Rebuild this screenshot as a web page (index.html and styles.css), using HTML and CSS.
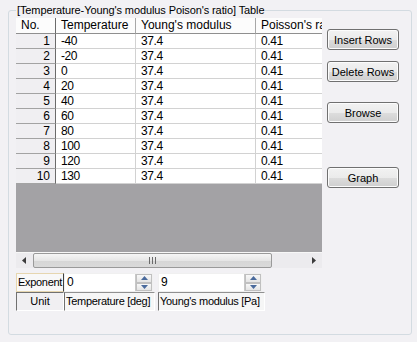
FILE: index.html
```html
<!DOCTYPE html>
<html lang="en">
<head>
  <meta charset="UTF-8" />
  <title>Young's modulus Table</title>
  <link rel="stylesheet" href="styles.css">
</head>
<body>
  <fieldset class="group">
    <legend>[Temperature-Young's modulus Poison's ratio] Table</legend>
    <div class="main">
      <div class="left">
        <div class="grid">
          <div class="row head">
            <div class="hc first">No.</div>
            <div class="hc">Temperature</div>
            <div class="hc">Young's modulus</div>
            <div class="hc">Poisson's ra</div>
          </div>
          <div class="row"><div class="rh">1</div><div class="c">-40</div><div class="c">37.4</div><div class="c">0.41</div></div>
          <div class="row"><div class="rh">2</div><div class="c">-20</div><div class="c">37.4</div><div class="c">0.41</div></div>
          <div class="row"><div class="rh">3</div><div class="c">0</div><div class="c">37.4</div><div class="c">0.41</div></div>
          <div class="row"><div class="rh">4</div><div class="c">20</div><div class="c">37.4</div><div class="c">0.41</div></div>
          <div class="row"><div class="rh">5</div><div class="c">40</div><div class="c">37.4</div><div class="c">0.41</div></div>
          <div class="row"><div class="rh">6</div><div class="c">60</div><div class="c">37.4</div><div class="c">0.41</div></div>
          <div class="row"><div class="rh">7</div><div class="c">80</div><div class="c">37.4</div><div class="c">0.41</div></div>
          <div class="row"><div class="rh">8</div><div class="c">100</div><div class="c">37.4</div><div class="c">0.41</div></div>
          <div class="row"><div class="rh">9</div><div class="c">120</div><div class="c">37.4</div><div class="c">0.41</div></div>
          <div class="row"><div class="rh">10</div><div class="c">130</div><div class="c">37.4</div><div class="c">0.41</div></div>
          <div class="empty"></div>
          <div class="hscroll">
            <div class="arrow">
              <svg width="5" height="7" viewBox="0 0 5 7"><path d="M4 0 L0 3.5 L4 7 Z" fill="#3c3c3c"/></svg>
            </div>
            <div class="thumb">
              <svg width="7" height="7" viewBox="0 0 7 7"><path d="M0.5 0v7M3.5 0v7M6.5 0v7" stroke="#6a6a6a" stroke-width="1"/></svg>
            </div>
            <div class="track"></div>
            <div class="arrow">
              <svg width="5" height="7" viewBox="0 0 5 7"><path d="M1 0 L5 3.5 L1 7 Z" fill="#3c3c3c"/></svg>
            </div>
          </div>
        </div>

        <div class="units">
          <div class="urow">
            <div class="lbl exp">Exponent</div>
            <div class="num first-num">
              <span>0</span>
              <div class="spin">
                <div class="sp"><svg width="7" height="4" viewBox="0 0 7 4"><path d="M0 4 L3.5 0 L7 4 Z" fill="#4a6a9c"/></svg></div>
                <div class="sp"><svg width="7" height="4" viewBox="0 0 7 4"><path d="M0 0 L3.5 4 L7 0 Z" fill="#4a6a9c"/></svg></div>
              </div>
            </div>
            <div class="num second-num">
              <span>9</span>
              <div class="spin">
                <div class="sp"><svg width="7" height="4" viewBox="0 0 7 4"><path d="M0 4 L3.5 0 L7 4 Z" fill="#4a6a9c"/></svg></div>
                <div class="sp"><svg width="7" height="4" viewBox="0 0 7 4"><path d="M0 0 L3.5 4 L7 0 Z" fill="#4a6a9c"/></svg></div>
              </div>
            </div>
          </div>
          <div class="urow">
            <div class="lbl unit">Unit</div>
            <div class="lbl ucell t-unit">Temperature [deg]</div>
            <div class="lbl ucell y-unit">Young's modulus [Pa]</div>
          </div>
        </div>
      </div>

      <div class="buttons">
        <button class="btn b-insert">Insert Rows</button>
        <button class="btn b-delete">Delete Rows</button>
        <button class="btn b-browse">Browse</button>
        <button class="btn b-graph">Graph</button>
      </div>
    </div>
  </fieldset>
</body>
</html>
```

FILE: styles.css
```css
body {
  margin: 0;
  background-color: #f2f1f4;
  font-family: "Liberation Sans", Arial, sans-serif;
  font-size: 11px;
  color: #000;
}
.group {
  box-sizing: border-box;
  margin: 3px 0 0 8px;
  width: 404px;
  height: 332px;
  padding: 1px 0 0 7px;
  border: 1px solid #d3dbe1;
  border-radius: 3px;
  min-width: 0;
}
.group legend {
  padding: 0 1px;
  margin-left: 0;
  line-height: 14px;
  font-size: 11px;
  letter-spacing: -0.1px;
}
.main {
  display: flex;
  gap: 5px;
}
.left {
  width: 306px;
}
.grid {
  display: flex;
  flex-direction: column;
  height: 250px;
  width: 306px;
  overflow: hidden;
  background: #fff;
}
.row {
  display: grid;
  grid-template-columns: 40px 80px 120px 66px;
  width: 306px;
  height: 15px;
  flex: none;
}
.row.head {
  height: 16px;
}
.row > div {
  box-sizing: border-box;
  line-height: 14px;
  white-space: nowrap;
  overflow: hidden;
}
.hc {
  background: #fcfcfc;
  border-right: 1px solid #a7a7a7;
  border-bottom: 1px solid #8f8f8f;
  padding-left: 5px;
  line-height: 15px !important;
  font-size: 12px;
}
.hc.first {
  border-right-color: #6b6b6b;
}
.hc:last-child {
  border-right: none;
}
.rh {
  background: #f0eff2;
  border-right: 1px solid #6b6b6b;
  border-bottom: 1px solid #a3a3a3;
  text-align: right;
  padding-right: 5px;
  font-size: 12px;
}
.c {
  border-right: 1px solid #d2d2d2;
  border-bottom: 1px solid #d2d2d2;
  padding-left: 5px;
  font-size: 12px;
  letter-spacing: -0.4px;
}
.c:last-child {
  border-right: none;
}
.empty {
  flex: 1;
  background: #a3a2a5;
}
.hscroll {
  display: flex;
  height: 16px;
  flex: none;
  background: #ecebee;
  border-top: 1px solid #f7f7f7;
  box-sizing: border-box;
}
.arrow {
  width: 17px;
  display: flex;
  align-items: center;
  justify-content: center;
}
.thumb {
  box-sizing: border-box;
  width: 239px;
  border: 1px solid #9a9a9a;
  border-radius: 2px;
  background: linear-gradient(#f6f6f6, #e6e6e6 50%, #d6d6d6 51%, #dadada);
  display: flex;
  align-items: center;
  justify-content: center;
}
.track {
  flex: 1;
}
.units {
  margin-top: 5px;
}
.urow {
  display: flex;
  height: 19px;
}
.lbl {
  box-sizing: border-box;
  line-height: 17px;
  white-space: nowrap;
  overflow: hidden;
  font-size: 11px;
}
.exp {
  width: 48px;
  padding-left: 1px;
  letter-spacing: -0.3px;
  background: #f8f8f8;
  border: 1px solid #e6d6b0;
  border-right-color: #404040;
}
.num {
  box-sizing: border-box;
  display: flex;
  justify-content: space-between;
  background: #fff;
  border: 1px solid #f0f0f0;
  font-size: 12px;
  line-height: 17px;
}
.num span {
  padding-left: 2px;
}
.first-num {
  width: 89px;
}
.second-num {
  width: 104px;
  margin-left: 5px;
}
.spin {
  width: 16px;
  display: flex;
  flex-direction: column;
  border-left: 1px solid #c8c8c8;
  background: #f0f0f0;
}
.sp {
  flex: 1;
  display: flex;
  align-items: center;
  justify-content: center;
  background: linear-gradient(#f8f8f8, #e4e4e4);
  border: 1px solid #c0c0c0;
}
.unit {
  width: 48px;
  text-align: center;
  background: #f0eff2;
  border: 1px solid #fff;
  border-top-color: #707070;
  border-left-color: #707070;
}
.ucell {
  padding-left: 1px;
  letter-spacing: -0.3px;
  background: #f6f6f6;
  border: 1px solid #fff;
  border-top-color: #909090;
  border-left-color: #707070;
}
.t-unit {
  width: 91px;
}
.y-unit {
  width: 107px;
  margin-left: 3px;
}
.buttons {
  display: flex;
  flex-direction: column;
  width: 72px;
}
.btn {
  box-sizing: border-box;
  height: 21px;
  width: 72px;
  padding: 0;
  border: 1px solid #707070;
  border-radius: 3px;
  background: linear-gradient(#f2f2f2, #ebebeb 50%, #dddddd 51%, #cfcfcf);
  font-family: "Liberation Sans", Arial, sans-serif;
  font-size: 11px;
  color: #000;
  box-shadow: inset 0 0 0 1px #fcfcfc;
}
.b-insert { margin-top: 11px; }
.b-delete { margin-top: 11px; }
.b-browse { margin-top: 20px; }
.b-graph { margin-top: 44px; }
```
